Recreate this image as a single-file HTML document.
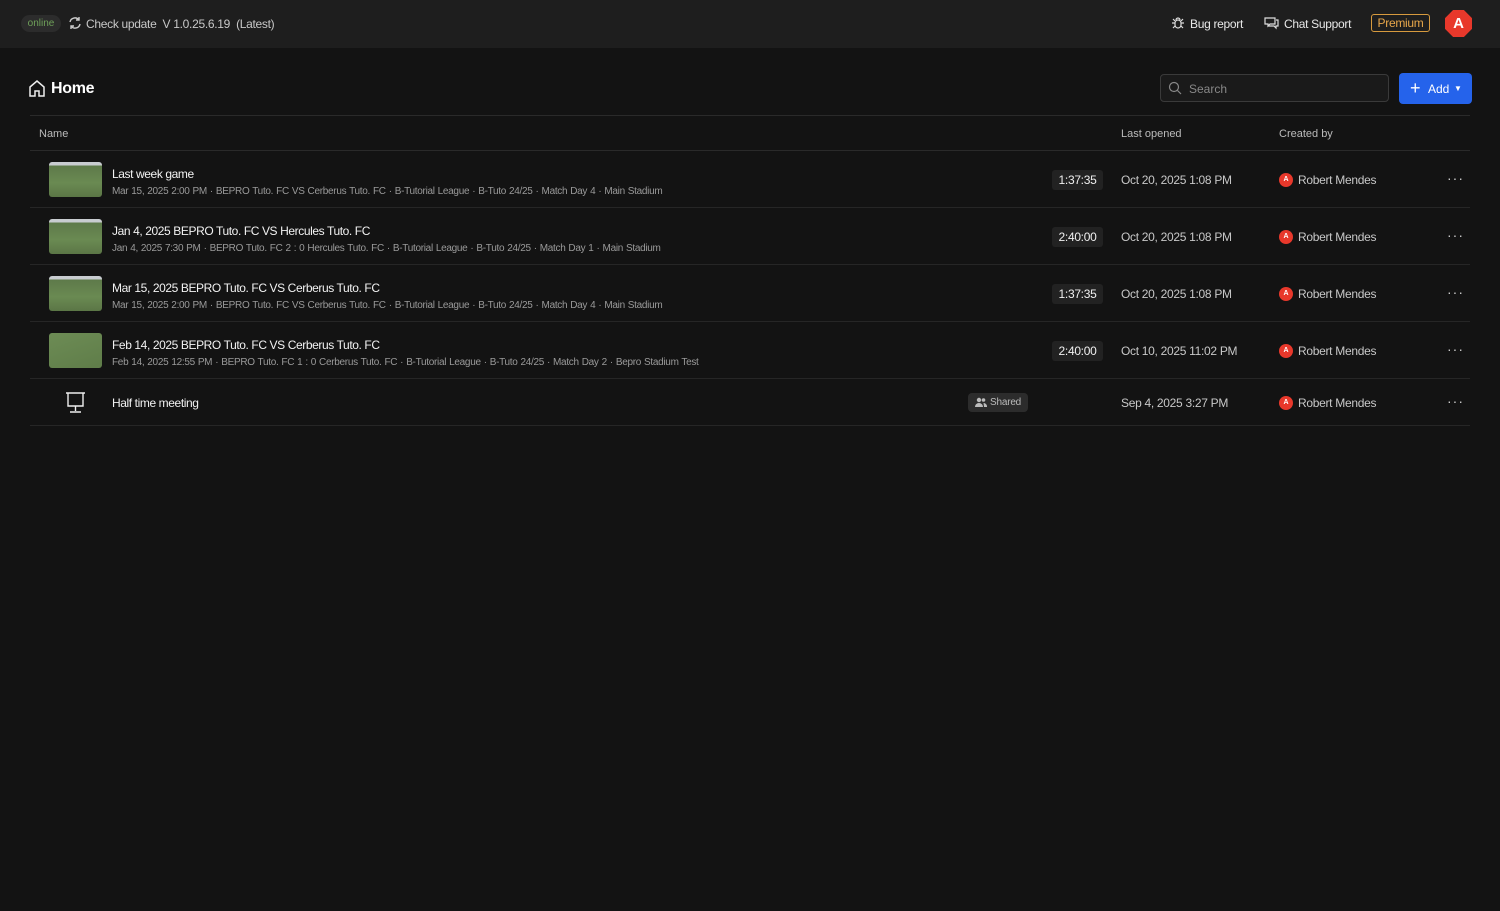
<!DOCTYPE html>
<html><head><meta charset="utf-8"><style>
*{box-sizing:border-box;margin:0;padding:0}
body{width:1500px;height:911px;background:#131313;font-family:"Liberation Sans",sans-serif;color:#e8e8e8;position:relative;overflow:hidden}
.top{position:absolute;left:0;top:0;width:1500px;height:48px;background:#1e1e1e}
.a{position:absolute;white-space:nowrap}
.thumb{position:absolute;left:49px;width:53px;height:35px;border-radius:3px;background:linear-gradient(180deg,#c8ccd0 0,#c8ccd0 3px,#5e7a4a 4px,#6a8a52 60%,#5b7646)}
.title{font-size:12px;color:#f2f2f2;letter-spacing:-0.4px}
.sub{font-size:10px;color:#9a9a9a;letter-spacing:-0.3px;word-spacing:0.5px}
.dur{position:absolute;left:1052px;width:51px;height:20px;background:#222;border-radius:3px;font-size:12px;text-align:center;line-height:20px;color:#f0f0f0;letter-spacing:-0.3px}
.sep{position:absolute;left:30px;width:1440px;height:1px;background:#262626}
.av{position:absolute;left:1279px;width:14px;height:14px;border-radius:50%;background:#e8382b;color:#fff;font-size:7px;font-weight:bold;text-align:center;line-height:14px}
.dots{position:absolute;left:1447px;font-size:14px;color:#ccc;letter-spacing:1px}
.g{font-size:12px;color:#c8c8c8;letter-spacing:-0.3px}
</style></head><body>
<div class="top"></div>
<div class="a" style="left:21px;top:15px;width:40px;height:17px;border-radius:9px;background:#2c2c2c;color:#6fa15a;font-size:10px;text-align:center;line-height:17px">online</div>
<svg class="a" style="left:68px;top:16px" width="14" height="14" viewBox="0 0 14 14" fill="none" stroke="#ccc" stroke-width="1.4"><path d="M2 6a5 5 0 0 1 9-2M12 8a5 5 0 0 1-9 2"/><path d="M11 1v3H8M3 13v-3h3"/></svg>
<div class="a g" style="left:86px;top:17px">Check update&nbsp;&nbsp;V 1.0.25.6.19&nbsp;&nbsp;(Latest)</div>
<svg class="a" style="left:1171px;top:16px" width="14" height="14" viewBox="0 0 14 14" fill="none" stroke="#ddd" stroke-width="1.2"><rect x="4" y="4" width="6" height="8" rx="3"/><path d="M5 4a2 2 0 0 1 4 0M1 7h3M10 7h3M2 3l2 2M12 3l-2 2M2 12l2-2M12 12l-2-2"/></svg>
<div class="a g" style="left:1190px;top:17px;color:#e8e8e8">Bug report</div>
<svg class="a" style="left:1264px;top:16px" width="15" height="14" viewBox="0 0 15 14" fill="none" stroke="#ddd" stroke-width="1.2"><path d="M1 2h10v6H6l-2 2V8H1z"/><path d="M4 10h6l2 2v-2h2V4h-2"/></svg>
<div class="a g" style="left:1284px;top:17px;color:#e8e8e8">Chat Support</div>
<div class="a" style="left:1371px;top:14px;width:59px;height:18px;border:1px solid #d79a3e;border-radius:3px;color:#e8a74a;font-size:12px;text-align:center;line-height:16px;letter-spacing:-0.3px">Premium</div>
<div class="a" style="left:1445px;top:10px;width:27px;height:27px;background:#e8382b;clip-path:polygon(30% 0,70% 0,100% 30%,100% 70%,70% 100%,30% 100%,0 70%,0 30%);color:#fff;font-weight:bold;font-size:15px;text-align:center;line-height:27px">A</div>

<svg class="a" style="left:28px;top:79px" width="18" height="18" viewBox="0 0 18 18" fill="none" stroke="#eee" stroke-width="1.5"><path d="M2 8L9 2l7 6v9h-5v-5H7v5H2z"/></svg>
<div class="a" style="left:51px;top:80px;font-size:16px;font-weight:bold;color:#fff;letter-spacing:-0.3px">Home</div>
<div class="a" style="left:1160px;top:74px;width:229px;height:28px;border:1px solid #3a3a3a;border-radius:4px;background:#1a1a1a"></div>
<svg class="a" style="left:1168px;top:81px" width="14" height="14" viewBox="0 0 14 14" fill="none" stroke="#888" stroke-width="1.2"><circle cx="6" cy="6" r="4.5"/><path d="M9.5 9.5L13 13"/></svg>
<div class="a" style="left:1189px;top:82px;font-size:12px;color:#888">Search</div>
<div class="a" style="left:1399px;top:73px;width:73px;height:31px;background:#2563eb;border-radius:4px"></div>
<div class="a" style="left:1410px;top:79px;font-size:18px;color:#fff;line-height:18px">+</div>
<div class="a" style="left:1428px;top:82px;font-size:12px;color:#fff">Add</div>
<div class="a" style="left:1454px;top:84px;font-size:8px;color:#fff">▼</div>

<div class="sep" style="top:115px;background:#2a2a2a"></div>
<div class="a" style="left:39px;top:128px;font-size:11px;color:#bbb">Name</div>
<div class="a" style="left:1121px;top:128px;font-size:11px;color:#bbb">Last opened</div>
<div class="a" style="left:1279px;top:128px;font-size:11px;color:#bbb">Created by</div>
<div class="sep" style="top:150px;background:#2a2a2a"></div>

<div class="thumb" style="top:162px"></div>
<div class="a title" style="left:112px;top:167px">Last week game</div>
<div class="a sub" style="left:112px;top:186px">Mar 15, 2025 2:00 PM · BEPRO Tuto. FC VS Cerberus Tuto. FC · B-Tutorial League · B-Tuto 24/25 · Match Day 4 · Main Stadium</div>
<div class="dur" style="top:170px">1:37:35</div>
<div class="a g" style="left:1121px;top:173px">Oct 20, 2025 1:08 PM</div>
<div class="av" style="top:173px">A</div><div class="a g" style="left:1298px;top:173px">Robert Mendes</div>
<div class="dots" style="top:170px">···</div>
<div class="sep" style="top:207px"></div>

<div class="thumb" style="top:219px"></div>
<div class="a title" style="left:112px;top:224px">Jan 4, 2025 BEPRO Tuto. FC VS Hercules Tuto. FC</div>
<div class="a sub" style="left:112px;top:243px">Jan 4, 2025 7:30 PM · BEPRO Tuto. FC 2 : 0 Hercules Tuto. FC · B-Tutorial League · B-Tuto 24/25 · Match Day 1 · Main Stadium</div>
<div class="dur" style="top:227px">2:40:00</div>
<div class="a g" style="left:1121px;top:230px">Oct 20, 2025 1:08 PM</div>
<div class="av" style="top:230px">A</div><div class="a g" style="left:1298px;top:230px">Robert Mendes</div>
<div class="dots" style="top:227px">···</div>
<div class="sep" style="top:264px"></div>

<div class="thumb" style="top:276px"></div>
<div class="a title" style="left:112px;top:281px">Mar 15, 2025 BEPRO Tuto. FC VS Cerberus Tuto. FC</div>
<div class="a sub" style="left:112px;top:300px">Mar 15, 2025 2:00 PM · BEPRO Tuto. FC VS Cerberus Tuto. FC · B-Tutorial League · B-Tuto 24/25 · Match Day 4 · Main Stadium</div>
<div class="dur" style="top:284px">1:37:35</div>
<div class="a g" style="left:1121px;top:287px">Oct 20, 2025 1:08 PM</div>
<div class="av" style="top:287px">A</div><div class="a g" style="left:1298px;top:287px">Robert Mendes</div>
<div class="dots" style="top:284px">···</div>
<div class="sep" style="top:321px"></div>

<div class="thumb" style="top:333px;background:linear-gradient(160deg,#6d8c55,#5f7d49)"></div>
<div class="a title" style="left:112px;top:338px">Feb 14, 2025 BEPRO Tuto. FC VS Cerberus Tuto. FC</div>
<div class="a sub" style="left:112px;top:357px">Feb 14, 2025 12:55 PM · BEPRO Tuto. FC 1 : 0 Cerberus Tuto. FC · B-Tutorial League · B-Tuto 24/25 · Match Day 2 · Bepro Stadium Test</div>
<div class="dur" style="top:341px">2:40:00</div>
<div class="a g" style="left:1121px;top:344px">Oct 10, 2025 11:02 PM</div>
<div class="av" style="top:344px">A</div><div class="a g" style="left:1298px;top:344px">Robert Mendes</div>
<div class="dots" style="top:341px">···</div>
<div class="sep" style="top:378px"></div>

<svg class="a" style="left:65px;top:392px" width="21" height="21" viewBox="0 0 21 21" fill="none" stroke="#eee" stroke-width="1.4"><path d="M1 1h19M3 1v13h15V1M10.5 14v5M5 20h11"/></svg>
<div class="a title" style="left:112px;top:396px">Half time meeting</div>
<div class="a" style="left:968px;top:393px;width:60px;height:19px;background:#2c2c2c;border-radius:4px;font-size:10px;color:#bbb;line-height:19px;padding-left:22px;letter-spacing:-0.2px">Shared</div>
<svg class="a" style="left:975px;top:397px" width="12" height="11" viewBox="0 0 12 11" fill="#bbb"><circle cx="4" cy="3" r="2.2"/><path d="M0 10a4 4 0 0 1 8 0z"/><circle cx="8.5" cy="3" r="1.8"/><path d="M8.5 6a3.5 3.5 0 0 1 3.5 4H9z"/></svg>
<div class="a g" style="left:1121px;top:396px">Sep 4, 2025 3:27 PM</div>
<div class="av" style="top:396px">A</div><div class="a g" style="left:1298px;top:396px">Robert Mendes</div>
<div class="dots" style="top:393px">···</div>
<div class="sep" style="top:425px"></div>
</body></html>
